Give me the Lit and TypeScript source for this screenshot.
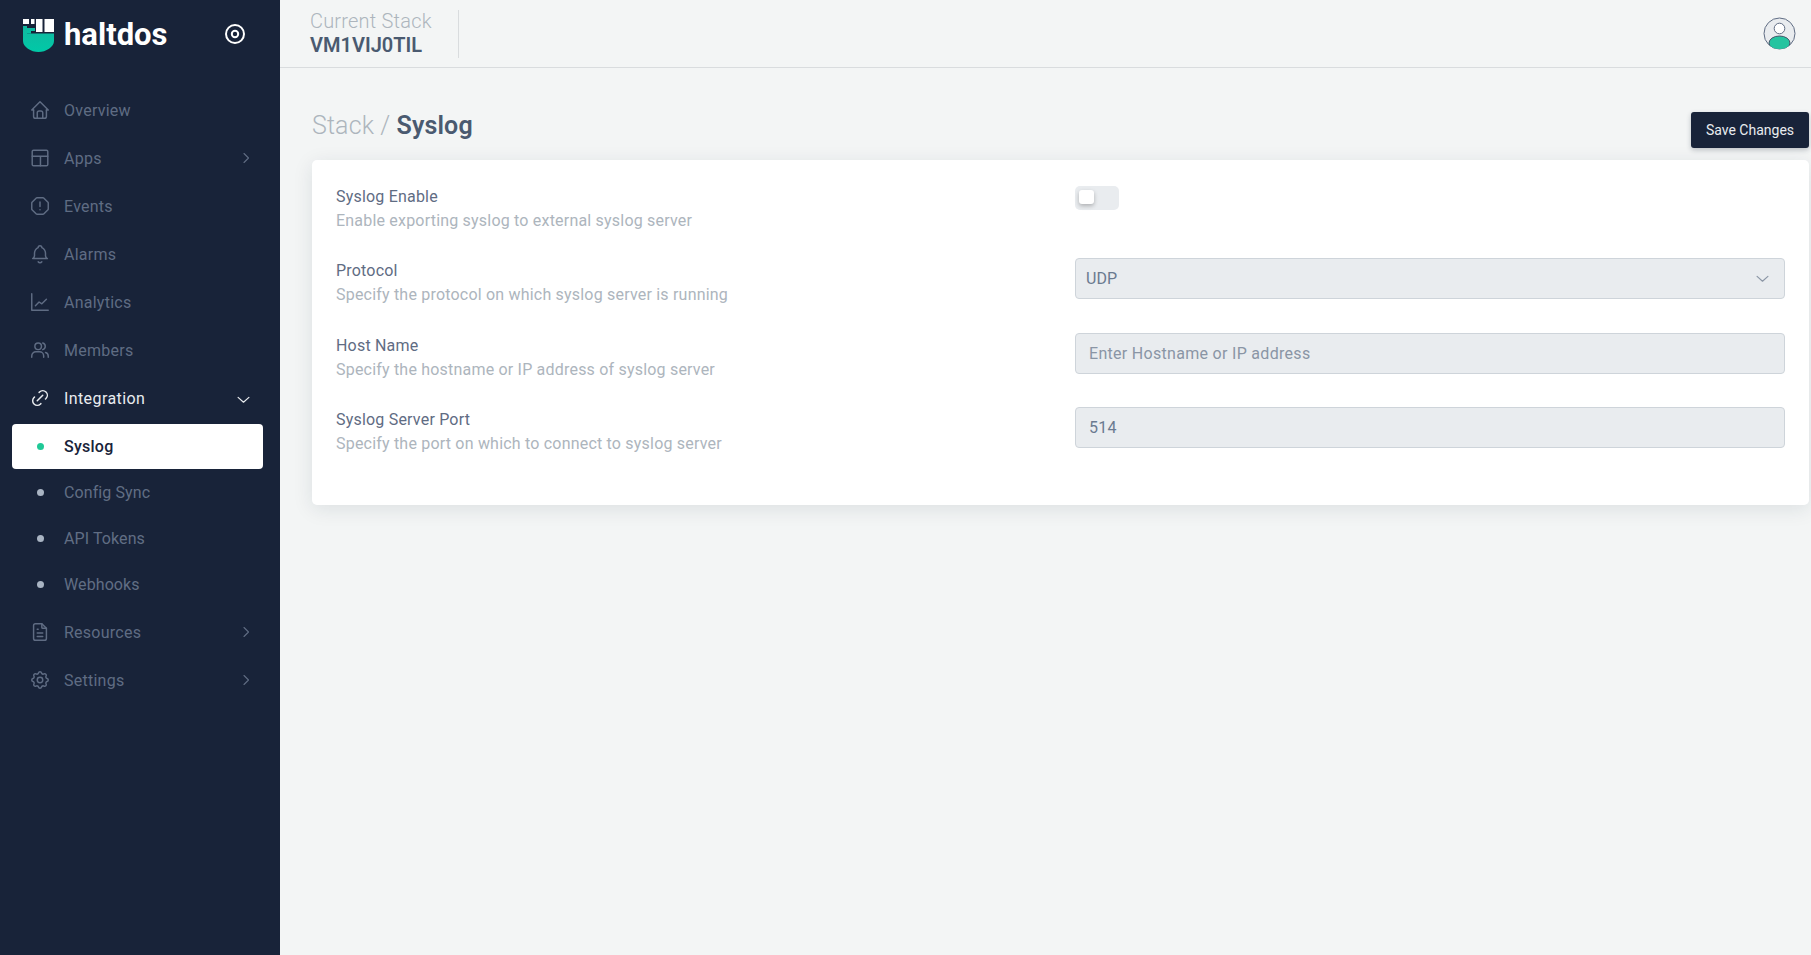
import { LitElement, html, css, svg } from "lit";
import { customElement } from "lit/decorators.js";

const ic = (body: unknown) => html`<svg class="ic" viewBox="0 0 24 24" fill="none" stroke="currentColor" stroke-width="1.6" stroke-linecap="round" stroke-linejoin="round">${body}</svg>`;
const icons: Record<string, unknown> = {
  home: svg`<path d="M5 12H3l9-9 9 9h-2"/><path d="M5 12v7a2 2 0 0 0 2 2h10a2 2 0 0 0 2-2v-7"/><path d="M9 21v-6a2 2 0 0 1 2-2h2a2 2 0 0 1 2 2v6"/>`,
  layout: svg`<rect x="3.500" y="3.500" width="17" height="17" rx="1.500"/><path d="M3.500 10h17M12.500 10v10.500"/>`,
  alert: svg`<path d="M8.700 3h6.600c.3 0 .5.1.7.3L20.700 8c.2.2.3.4.3.7v6.600c0 .3-.1.5-.3.7L16 20.700c-.2.2-.4.3-.7.3H8.700c-.3 0-.5-.1-.7-.3L3.300 16c-.2-.2-.3-.4-.3-.7V8.700c0-.3.1-.5.3-.7L8 3.300c.2-.2.4-.3.7-.3z"/><path d="M12 7.500v5M12 16h.01"/>`,
  bell: svg`<path d="M10 5a2 2 0 1 1 4 0 7 7 0 0 1 4 6v3a4 4 0 0 0 2 3H4a4 4 0 0 0 2-3v-3a7 7 0 0 1 4-6"/><path d="M10 20.500a2.500 2.500 0 0 0 4 0"/>`,
  chart: svg`<path d="M3 21h18M3 21V3"/><path d="M7 16l4-4 3 2 5-5"/>`,
  users: svg`<circle cx="10" cy="8" r="3.600"/><path d="M3 20v-1.500a4.500 4.500 0 0 1 4.500-4.500h4a4.500 4.500 0 0 1 4.500 4.500V20"/><path d="M15 4.300a3.800 3.800 0 0 1 0 7.300"/><path d="M21 20v-1.500a4 4 0 0 0-3-3.800"/>`,
  link: svg`<path d="M9 15l6-6"/><path d="M11 6l.463-.536a5 5 0 0 1 7.071 7.072L18 13"/><path d="M13 18l-.397.534a5.068 5.068 0 0 1-7.127 0 4.972 4.972 0 0 1 0-7.071L6 11"/>`,
  file: svg`<path d="M14 3v4a1 1 0 0 0 1 1h4"/><path d="M17 21H7a2 2 0 0 1-2-2V5a2 2 0 0 1 2-2h7l5 5v11a2 2 0 0 1-2 2z"/><path d="M9 9h1M9 13h6M9 17h6"/>`,
  gear: svg`<path d="M10.325 4.317c.426-1.756 2.924-1.756 3.350 0a1.724 1.724 0 0 0 2.573 1.066c1.543-.94 3.310.826 2.370 2.370a1.724 1.724 0 0 0 1.065 2.572c1.756.426 1.756 2.924 0 3.350a1.724 1.724 0 0 0-1.066 2.573c.94 1.543-.826 3.310-2.370 2.370a1.724 1.724 0 0 0-2.572 1.065c-.426 1.756-2.924 1.756-3.350 0a1.724 1.724 0 0 0-2.573-1.066c-1.543.94-3.310-.826-2.370-2.370a1.724 1.724 0 0 0-1.065-2.572c-1.756-.426-1.756-2.924 0-3.350a1.724 1.724 0 0 0 1.066-2.573c-.94-1.543.826-3.310 2.370-2.370.996.608 2.296.07 2.572-1.065z"/><circle cx="12" cy="12" r="3"/>`,
};
const chevR = html`<svg class="chev" viewBox="0 0 12 12" fill="none" stroke="currentColor" stroke-width="1.100" stroke-linecap="round" stroke-linejoin="round"><path d="M4 1.500l4.500 4.500L4 10.500"/></svg>`;
const chevD = html`<svg class="chev down" viewBox="0 0 12 12" fill="none" stroke="currentColor" stroke-width="1.100" stroke-linecap="round" stroke-linejoin="round"><path d="M1 4l5 4.500L11 4"/></svg>`;

type Item = { label: string; icon?: string; arrow?: "r" | "d"; open?: boolean; active?: boolean; last?: boolean };
const nav: Item[] = [
  { label: "Overview", icon: "home" },
  { label: "Apps", icon: "layout", arrow: "r" },
  { label: "Events", icon: "alert" },
  { label: "Alarms", icon: "bell" },
  { label: "Analytics", icon: "chart" },
  { label: "Members", icon: "users" },
  { label: "Integration", icon: "link", arrow: "d", open: true },
  { label: "Syslog", active: true },
  { label: "Config Sync" },
  { label: "API Tokens" },
  { label: "Webhooks", last: true },
  { label: "Resources", icon: "file", arrow: "r" },
  { label: "Settings", icon: "gear", arrow: "r" },
];

@customElement("app-root")
export class AppRoot extends LitElement {
  static styles = css`
    :host { display: block; min-height: 100vh; font-family: Roboto, "Liberation Sans", sans-serif; background: #f3f5f5; }
    * { box-sizing: border-box; }
    .shell { display: flex; min-height: 955px; }
    .side { width: 280px; flex: none; background: #182339; display: flex; flex-direction: column; }
    .brand { height: 67px; display: flex; align-items: center; padding: 0 0 0 23px; margin-bottom: 19px; }
    .logo { width: 32px; height: 33px; flex: none; margin: 3px 9px 0 0; }
    .brandname { font-size: 31px; font-weight: 700; color: #fff; flex: 1; padding-top: 2px; }
    .target { width: 22px; height: 22px; margin-right: 34px; color: #fff; flex: none; }
    .item { display: flex; align-items: center; height: 48px; padding: 0 28px; color: #5f6c83; font-size: 16px; letter-spacing: .25px; }
    .item.open { color: #e9ecef; letter-spacing: .4px; }
    .item .lead { width: 24px; height: 24px; flex: none; margin-right: 12px; display: flex; align-items: center; justify-content: center; }
    .ic { width: 22px; height: 22px; display: block; }
    .lbl { flex: 1; }
    .chev { width: 12px; height: 12px; flex: none; }
    .item .chev.down { width: 13px; height: 13px; margin-right: 2px; margin-top: 3px; }
    .sub { height: 46px; margin: 0 17px 0 12px; padding: 0 0 0 16px; font-size: 16px; letter-spacing: .1px; color: #616e84; display: flex; align-items: center; border-radius: 4px; }
    .sub.last { margin-bottom: 1px; }
    .sub .lead { width: 24px; margin-right: 12px; display: flex; justify-content: center; }
    .dot { width: 7px; height: 7px; border-radius: 50%; background: #a9b4c3; display: block; }
    .sub.active { background: #fff; color: #182339; font-weight: 500; height: 45px; margin-top: 2px; letter-spacing: .25px; }
    .sub.active .dot { background: #20c997; }
    .main { flex: 1; min-width: 0; display: flex; flex-direction: column; }
    .top { height: 68px; border-bottom: 1px solid #d9dcde; display: flex; align-items: center; padding: 0 15px 0 30px; }
    .stack { display: flex; flex-direction: column; justify-content: center; height: 48px; width: 149px; border-right: 1px solid #d9dcde; }
    .stack .k { font-size: 20px; font-weight: 300; color: #adb5bd; line-height: 24px; letter-spacing: .2px; margin-top: -2px; }
    .stack .v { font-size: 20px; font-weight: 600; color: #4a5a70; line-height: 24px; }
    .avatar { width: 33px; height: 33px; margin-left: auto; display: block; }
    .content { padding: 44px 2px 0 32px; display: flex; flex-direction: column; }
    .head { display: flex; align-items: flex-start; justify-content: space-between; height: 36px; margin-bottom: 12px; }
    .crumb { font-size: 25px; color: #adb5bd; font-weight: 300; line-height: 28px; letter-spacing: .13px; }
    .crumb b { color: #4a5a70; font-weight: 600; }
    .save { height: 36px; width: 118px; border: 0; border-radius: 3px; background: #182339; color: #e9ecef; font: 400 14px Roboto, sans-serif; box-shadow: 0 2px 5px rgba(24,35,57,.25); padding: 0; }
    .card { background: #fff; border-radius: 5px; box-shadow: 0 4px 20px rgba(24,35,57,.1); padding: 24px 24px 23.4px; display: grid; grid-template-columns: 739px 1fr; grid-auto-rows: 74.4px; }
    .info { display: flex; flex-direction: column; padding-top: 1px; }
    .t { font-size: 16px; color: #5f6c83; line-height: 24px; letter-spacing: .2px; }
    .d { font-size: 16px; color: #adb5bd; line-height: 24px; letter-spacing: .2px; }
    .toggle { width: 44px; height: 24px; border-radius: 5px; background: #e9ecef; margin-top: 2px; padding: 4px; }
    .knob { width: 15px; height: 14px; background: #fff; border-radius: 3px; box-shadow: 0 2px 4px rgba(0,0,0,.25); }
    .field { width: 100%; height: 41px; border: 1px solid #ced4da; border-radius: 4px; background: #e9ecef; font: 400 16px Roboto, sans-serif; color: #6b7a90; display: flex; align-items: center; justify-content: space-between; padding: 0 15px 0 10px; }
    input.field { padding: 0 13px; outline: 0; letter-spacing: .3px; }
    input.field::placeholder { color: #8a95a5; opacity: 1; }
    .field svg { width: 13px; height: 13px; color: #8b96a5; }
  `;

  private renderNav(i: Item) {
    if (!i.icon) {
      return html`<div class="sub ${i.active ? "active" : ""} ${i.last ? "last" : ""}"><span class="lead"><span class="dot"></span></span>${i.label}</div>`;
    }
    return html`<div class="item ${i.open ? "open" : ""}">
      <span class="lead">${ic(icons[i.icon])}</span><span class="lbl">${i.label}</span>
      ${i.arrow === "r" ? chevR : i.arrow === "d" ? chevD : ""}
    </div>`;
  }

  render() {
    return html`<div class="shell">
      <aside class="side">
        <div class="brand">
          <svg class="logo" viewBox="0 0 32 33">
            <defs><linearGradient id="lg" x1="0" y1="0" x2="0" y2="1"><stop offset="0" stop-color="#12b8a0"/><stop offset="1" stop-color="#00c9a7"/></linearGradient></defs>
            <path fill="url(#lg)" d="M0 7h4v7.500h27V22c0 6-8 11-15.500 11S0 28 0 22z"/>
            <path fill="url(#lg)" d="M4 9h8v3H8v2.500H4z"/>
            <path fill="#fff" d="M0 0h6v5H0zM8 0h3.500v5H8zM13 0h6.500v13H13zM21.500 0h9.500v13h-9.500z"/>
          </svg>
          <span class="brandname">haltdos</span>
          <svg class="target" viewBox="0 0 22 22" fill="none" stroke="currentColor" stroke-width="2"><circle cx="11" cy="11" r="9"/><circle cx="11" cy="11" r="3.200"/></svg>
        </div>
        ${nav.map((i) => this.renderNav(i))}
      </aside>
      <div class="main">
        <header class="top">
          <div class="stack"><span class="k">Current Stack</span><span class="v">VM1VIJ0TIL</span></div>
          <svg class="avatar" viewBox="0 0 33 33">
            <defs><clipPath id="av"><circle cx="16.500" cy="16.500" r="15.500"/></clipPath></defs>
            <circle cx="16.500" cy="16.500" r="15.500" fill="#e9ecef" stroke="#5f6c83" stroke-width="1"/>
            <ellipse clip-path="url(#av)" cx="16.500" cy="26" rx="10.500" ry="7" fill="#25c4a0" stroke="#44546a" stroke-width="1"/>
            <circle cx="16.500" cy="11.500" r="5.300" fill="#fff" stroke="#5f6c83" stroke-width="1"/>
          </svg>
        </header>
        <div class="content">
          <div class="head">
            <div class="crumb">Stack / <b>Syslog</b></div>
            <button class="save">Save Changes</button>
          </div>
          <section class="card">
            <div class="info"><span class="t">Syslog Enable</span><span class="d">Enable exporting syslog to external syslog server</span></div>
            <div><div class="toggle"><div class="knob"></div></div></div>
            <div class="info"><span class="t">Protocol</span><span class="d">Specify the protocol on which syslog server is running</span></div>
            <div><div class="field"><span>UDP</span>${chevD}</div></div>
            <div class="info"><span class="t">Host Name</span><span class="d">Specify the hostname or IP address of syslog server</span></div>
            <div><input class="field" disabled placeholder="Enter Hostname or IP address" /></div>
            <div class="info"><span class="t">Syslog Server Port</span><span class="d">Specify the port on which to connect to syslog server</span></div>
            <div><input class="field" disabled value="514" /></div>
          </section>
        </div>
      </div>
    </div>`;
  }
}
